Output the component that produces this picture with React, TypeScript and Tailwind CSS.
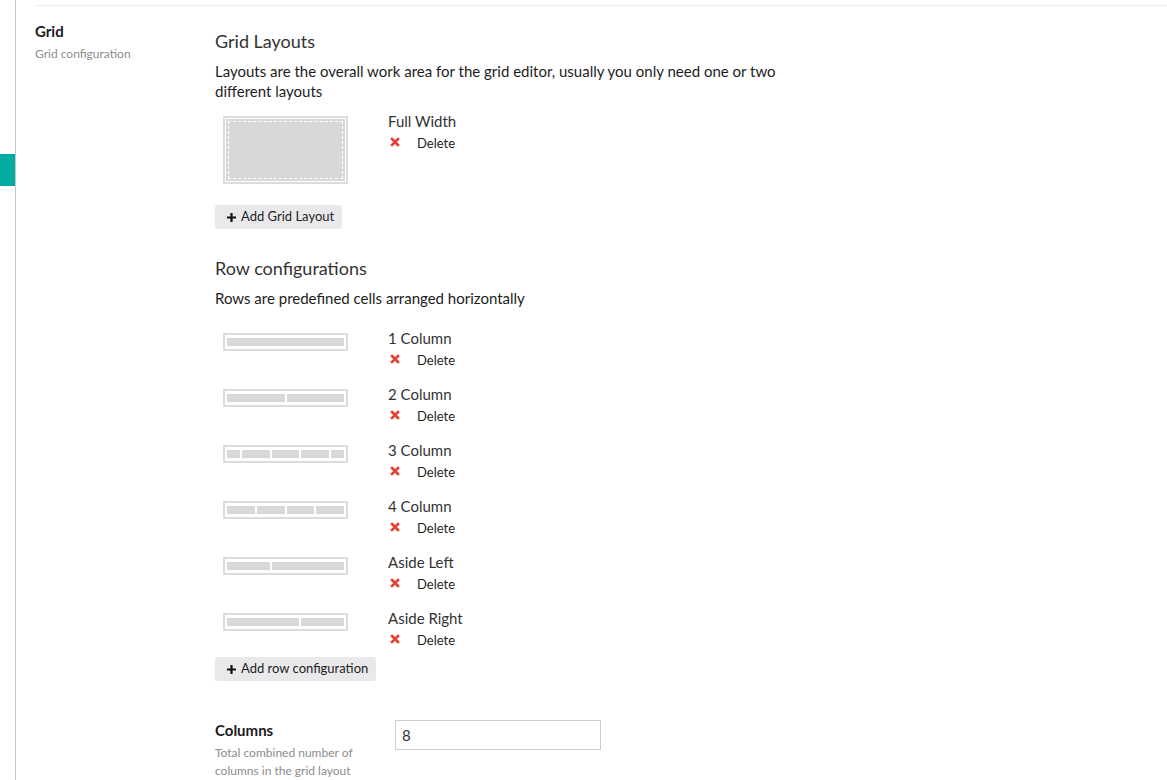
import React from "react";

const font = { fontFamily: "Lato, 'Noto Sans', sans-serif" };

function RedX() {
  return (
    <svg width="10" height="10" viewBox="0 0 10 10" className="-mt-[2px]">
      <path d="M2 2 L8 8 M8 2 L2 8" stroke="#ec3b35" strokeWidth="2.6" strokeLinecap="square" />
    </svg>
  );
}

function Plus() {
  return (
    <svg width="9" height="9" viewBox="0 0 9 9">
      <path d="M4.5 0 V9 M0 4.5 H9" stroke="#111" strokeWidth="2.2" />
    </svg>
  );
}

function ItemLabel({ name }: { name: string }) {
  return (
    <div className="flex flex-col">
      <div className="text-[15px] leading-[20px] text-[#333]">{name}</div>
      <div className="mt-[3px] flex h-[18px] items-center">
        <div className="flex w-[29px] items-center pl-[2px]">
          <RedX />
        </div>
        <span className="text-[13px] leading-[18px] text-[#1d1d1d]">Delete</span>
      </div>
    </div>
  );
}

function AddButton({ label }: { label: string }) {
  return (
    <button className="flex h-[24px] items-center gap-[5px] rounded-[3px] bg-[#e9e9eb] pl-[12px] pr-[8px] text-[13px] text-[#1d1d1d]">
      <Plus />
      <span>{label}</span>
    </button>
  );
}

const rows: { name: string; cells: number[] }[] = [
  { name: "1 Column", cells: [117] },
  { name: "2 Column", cells: [58, 57] },
  { name: "3 Column", cells: [13, 28, 27, 28, 13] },
  { name: "4 Column", cells: [28, 28, 27, 28] },
  { name: "Aside Left", cells: [43, 72] },
  { name: "Aside Right", cells: [72, 43] },
];

export default function App() {
  return (
    <div className="flex min-h-[780px] w-full bg-white" style={font}>
      <div className="w-[16px] shrink-0 border-r border-[#c4c4c8]">
        <div className="mt-[154px] h-[32px] w-[15px] bg-[#00ada0]" />
      </div>
      <div className="flex-1 pl-[19px]">
        <div className="h-[6px] border-b border-[#eeeeee]" />
        <div className="flex pt-[15px]">
          <div className="w-[180px] shrink-0">
            <div className="text-[15px] font-bold leading-[20px] text-[#1b1b1b]">Grid</div>
            <div className="mt-[4px] text-[12px] leading-[18px] text-[#8c8c8c]">Grid configuration</div>
          </div>
          <div className="flex-1 pt-[8px]">
            <h2 className="text-[18px] leading-[24px] text-[#333]">Grid Layouts</h2>
            <p className="mt-[8px] max-w-[580px] text-[15px] leading-[20px] text-[#1d1d1d]">
              Layouts are the overall work area for the grid editor, usually you only need one or two different layouts
            </p>
            <div className="mt-[10px] flex">
              <div className="w-[173px] shrink-0 pl-[8px] pt-[5px]">
                <div className="h-[68px] w-[125px] border-2 border-[#dcdcdc] bg-white p-[1px]">
                  <div className="h-full w-full bg-[#d8d8da] outline-1 outline-dashed outline-white outline-offset-[-3px]" />
                </div>
              </div>
              <ItemLabel name="Full Width" />
            </div>
            <div className="mt-[21px] flex">
              <AddButton label="Add Grid Layout" />
            </div>

            <h2 className="mt-[27px] text-[18px] leading-[24px] text-[#333]">Row configurations</h2>
            <p className="mt-[8px] text-[15px] leading-[20px] text-[#1d1d1d]">
              Rows are predefined cells arranged horizontally
            </p>
            <div className="mt-[20px] flex flex-col gap-[15px]">
              {rows.map((r) => (
                <div key={r.name} className="flex">
                  <div className="w-[173px] shrink-0 pl-[8px] pt-[5px]">
                    <div className="flex h-[18px] w-[125px] gap-[2px] border-2 border-[#dcdcdc] bg-white p-[3px_2px]">
                      {r.cells.map((w, i) => (
                        <div key={i} className="h-[8px] bg-[#d8d8da]" style={{ width: w }} />
                      ))}
                    </div>
                  </div>
                  <ItemLabel name={r.name} />
                </div>
              ))}
            </div>
            <div className="mt-[8px] flex">
              <AddButton label="Add row configuration" />
            </div>

            <div className="mt-[39px] flex">
              <div className="w-[180px] shrink-0">
                <div className="text-[15px] font-bold leading-[20px] text-[#1b1b1b]">Columns</div>
                <div className="mt-[4px] text-[12px] leading-[18px] text-[#8c8c8c]">
                  Total combined number of
                  <br />
                  columns in the grid layout
                </div>
              </div>
              <input
                className="h-[30px] w-[206px] border border-[#cfcfcf] px-[6px] text-[15px] text-[#333] outline-none"
                defaultValue="8"
              />
            </div>
          </div>
        </div>
      </div>
    </div>
  );
}
